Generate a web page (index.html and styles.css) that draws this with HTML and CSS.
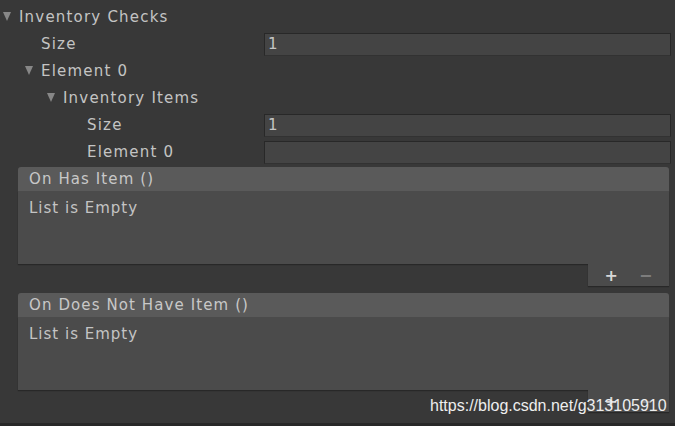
FILE: index.html
```
<!DOCTYPE html>
<html lang="en">

<head>
    <meta charset="UTF-8">
    <meta name="viewport" content="width=device-width, initial-scale=1.0">
    <title>Inventory Checks</title>
    <link rel="stylesheet" href="styles.css">
</head>

<body>

    <div class="inspector">

        <div class="row">
            <span class="fold"></span>
            <span class="label">Inventory Checks</span>
        </div>
        <div class="row lv1">
            <span class="label indent">Size</span>
            <div class="field">1</div>
        </div>
        <div class="row lv1">
            <span class="fold"></span>
            <span class="label">Element 0</span>
        </div>
        <div class="row lv2">
            <span class="fold"></span>
            <span class="label">Inventory Items</span>
        </div>
        <div class="row lv2">
            <span class="label indent">Size</span>
            <div class="field">1</div>
        </div>
        <div class="row lv2">
            <span class="label indent">Element 0</span>
            <div class="field"></div>
        </div>

        <div class="event">
            <div class="event-head">On Has Item ()</div>
            <div class="event-body">List is Empty</div>
            <div class="event-foot">
                <span class="btn">+</span>
                <span class="btn dim">&minus;</span>
            </div>
        </div>

        <div class="event second">
            <div class="event-head">On Does Not Have Item ()</div>
            <div class="event-body">List is Empty</div>
            <div class="event-foot">
                <span class="btn">+</span>
                <span class="btn dim">&minus;</span>
            </div>
        </div>

    </div>

    <div class="bottom"></div>

    <div class="mark">https://blog.csdn.net/g313105910</div>

</body>

</html>
```

FILE: styles.css
```
* {
    box-sizing: border-box;
}

html,
body {
    margin: 0;
    height: 100%;
    overflow: hidden;
    background-color: rgb(56, 56, 56);
    font-family: "DejaVu Sans", "Verdana", sans-serif;
    font-size: 15px;
    color: rgb(196, 196, 196);
}

body {
    position: relative;
    display: flex;
    flex-direction: column;
}

.inspector {
    flex: 1;
    padding-top: 3px;
}

.row {
    height: 27px;
    display: flex;
    align-items: center;
    padding-left: 3px;
    padding-right: 4px;
    letter-spacing: 1.2px;
}

.lv1 {
    padding-left: 25px;
}

.lv2 {
    padding-left: 47px;
}

.label.indent {
    padding-left: 16px;
}

.row.lv2 .label.indent {
    padding-left: 40px;
}

.fold {
    width: 0;
    height: 0;
    border-left: 4.5px solid transparent;
    border-right: 4.5px solid transparent;
    border-top: 9px solid rgb(135, 135, 135);
    margin-right: 8px;
    flex: none;
}

.field {
    margin-left: auto;
    height: 23px;
    margin-top: 1px;
    width: 407px;
    background-color: rgb(68, 68, 68);
    border: 1px solid rgb(40, 40, 40);
    border-bottom-color: rgb(50, 50, 50);
    padding-left: 3px;
    line-height: 21px;
    letter-spacing: 0;
}

.event {
    margin: 2px 6px 0 18px;
}

.event.second {
    margin-top: 7px;
}

.event-head {
    height: 24px;
    line-height: 24px;
    padding-left: 11px;
    background-color: rgb(90, 90, 90);
    border-radius: 3px 3px 0 0;
    letter-spacing: 1.1px;
    color: rgb(200, 200, 200);
}

.event-body {
    height: 73px;
    background-color: rgb(75, 75, 75);
    padding: 8px 11px;
    letter-spacing: 1px;
    box-shadow: 0 1px 1px rgb(40, 40, 40);
}

.event:first-child .event-body,
.event .event-body {
    padding-top: 8px;
}

.event-foot {
    margin-left: auto;
    width: 81px;
    height: 22px;
    background-color: rgb(75, 75, 75);
    display: flex;
    align-items: center;
    justify-content: space-around;
    padding: 0 6px 0 6px;
    box-shadow: 0 1px 1px rgb(40, 40, 40);
}

.btn {
    font-family: "DejaVu Sans", sans-serif;
    font-weight: bold;
    font-size: 16px;
    color: rgb(215, 215, 215);
}

.btn.dim {
    color: rgb(125, 125, 125);
}

.bottom {
    height: 3px;
    background-color: rgb(40, 40, 40);
}

.mark {
    position: absolute;
    left: 430px;
    top: 397px;
    font-family: "Liberation Sans", Arial, sans-serif;
    font-size: 16px;
    color: rgb(238, 238, 238);
}
```
